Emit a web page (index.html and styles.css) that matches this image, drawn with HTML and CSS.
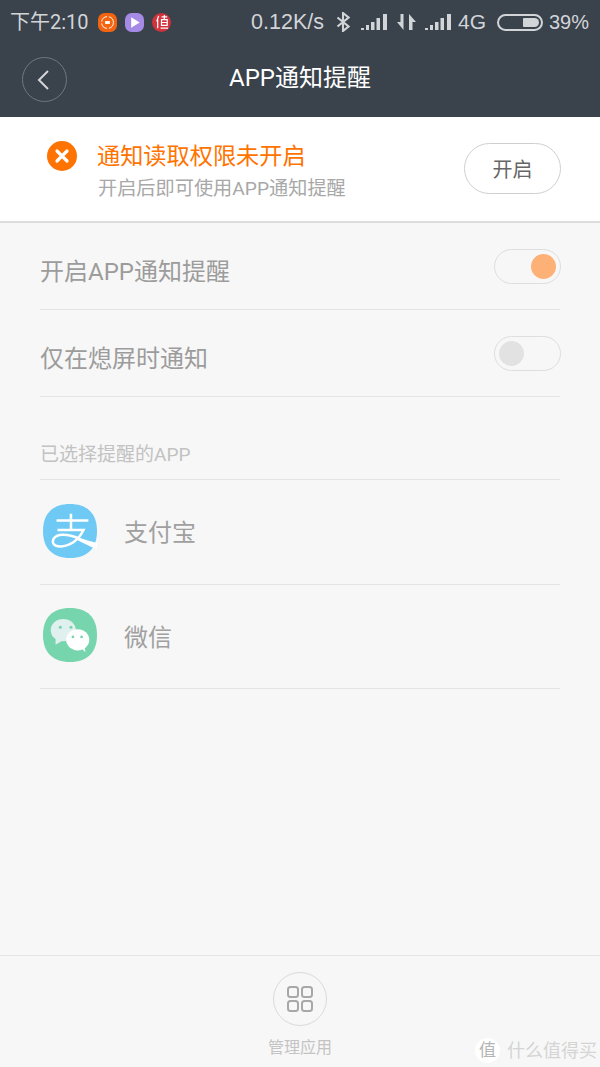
FILE: index.html
```html
<!DOCTYPE html>
<html lang="zh">
<head>
<meta charset="utf-8">
<title>APP通知提醒</title>
<link rel="stylesheet" href="styles.css">
</head>
<body>
<div class="page">
  <header class="header">
    <div class="status">
      <div class="status-left">
        <span class="time">下午2:10</span>
        <svg class="note" viewBox="0 0 20 20"><rect width="20" height="20" rx="7" fill="#f2640f"/><circle cx="10" cy="10" r="6.200" fill="none" stroke="#fff" stroke-width="1" stroke-dasharray="8 2"/><rect x="7.500" y="8.500" width="5" height="3" fill="#fff"/></svg>
        <svg class="note" viewBox="0 0 20 20"><rect width="20" height="20" rx="7" fill="#a58be6"/><path d="M6.500 4.500 15.500 10 6.500 15.500Z" fill="#fff"/></svg>
        <svg class="note" viewBox="0 0 20 20"><circle cx="10" cy="10" r="10" fill="#d0333c"/><path d="M7 3 5 9M6 7v9M10 4h6M13 2v5M10 7h6v6h-6zM10 10h6M9 16h8" stroke="#fff" stroke-width="1.300" fill="none"/></svg>
      </div>
      <div class="status-right">
        <span class="speed">0.12K/s</span>
        <svg class="bt" viewBox="0 0 14 20"><path d="M1.500 5.500 12.500 14.500 7 19V1l5.500 4.500L1.500 14.500" fill="none" stroke="#d2d5d8" stroke-width="2.100"/></svg>
        <svg class="signal" viewBox="0 0 26 18"><path d="M0 15h3v2H0zM5 12h3v5H5zM10 9h3.500v8H10zM15.500 5H19v12h-3.500zM22 1h4v16h-4z" fill="#d2d5d8"/></svg>
        <svg class="arrows" viewBox="0 0 20 18"><path d="M0 9h3.500V1h3v16zM12 17V1l7 8h-3.500v8z" fill="#d2d5d8"/></svg>
        <svg class="signal" viewBox="0 0 26 18"><path d="M0 15h3v2H0zM5 12h3v5H5zM10 9h3.500v8H10zM15.500 5H19v12h-3.500zM22 1h4v16h-4z" fill="#d2d5d8"/></svg>
        <span class="net">4G</span>
        <span class="battery"><span class="battery-fill"></span></span>
        <span class="percent">39%</span>
      </div>
    </div>
    <div class="titlebar">
      <button class="back" aria-label="返回">
        <svg viewBox="0 0 14 22" width="14" height="22"><path d="M12 2 3 11l9 9" fill="none" stroke="#d4d6d9" stroke-width="2"/></svg>
      </button>
      <h1 class="title">APP通知提醒</h1>
    </div>
  </header>

  <section class="banner">
    <span class="error-icon">
      <svg viewBox="0 0 30 30" width="30" height="30"><circle cx="15" cy="15" r="15" fill="#ff7300"/><path d="M10 10l10 10M20 10 10 20" stroke="#fff" stroke-width="3.200" stroke-linecap="round"/></svg>
    </span>
    <div class="banner-text">
      <div class="banner-title">通知读取权限未开启</div>
      <div class="banner-sub">开启后即可使用APP通知提醒</div>
    </div>
    <button class="open-btn">开启</button>
  </section>

  <main class="content">
    <div class="row setting">
      <span class="label">开启APP通知提醒</span>
      <span class="switch on"><span class="knob"></span></span>
    </div>
    <div class="row setting">
      <span class="label">仅在熄屏时通知</span>
      <span class="switch"><span class="knob"></span></span>
    </div>
    <div class="row section">已选择提醒的APP</div>
    <div class="row app">
      <svg class="app-icon" viewBox="0 0 56 56">
        <path d="M28 0C46 0 56 10 56 28S46 56 28 56 0 46 0 28 10 0 28 0Z" fill="#6fc9f5"/>
        <path d="M14 17H47M29 10V27M15 27H42C37 37 29 43 19 44 11 44.500 9 40 11 36 14 31 24 30 38 36" fill="none" stroke="#fff" stroke-width="2.600"/>
        <path d="M37 34.500C43 37 50 39 56 40.500V47C49 44 43 41 36 37.500Z" fill="#fff"/>
      </svg>
      <span class="app-name">支付宝</span>
    </div>
    <div class="row app">
      <svg class="app-icon" viewBox="0 0 56 56">
        <path d="M28 0C46 0 56 10 56 28S46 56 28 56 0 46 0 28 10 0 28 0Z" fill="#76d5ad"/>
        <ellipse cx="21" cy="23" rx="13" ry="11.500" fill="#dff0ee"/>
        <path d="M13 31l0 7 7-4z" fill="#dff0ee"/>
        <circle cx="18" cy="20" r="1.600" fill="#76d5ad"/>
        <circle cx="29" cy="20" r="1.600" fill="#76d5ad"/>
        <ellipse cx="36" cy="33" rx="12" ry="11" fill="#fff"/>
        <path d="M40 42l4 4-1-7z" fill="#fff"/>
        <circle cx="31" cy="30" r="1.400" fill="#76d5ad"/>
        <circle cx="40" cy="30" r="1.400" fill="#76d5ad"/>
      </svg>
      <span class="app-name">微信</span>
    </div>
  </main>

  <footer class="footer">
    <button class="manage" aria-label="管理应用">
      <svg viewBox="0 0 26 26" width="26" height="26">
        <rect x="1" y="1" width="10" height="10" rx="2.500" fill="none" stroke="#a8a8a8" stroke-width="2"/>
        <rect x="15" y="1" width="10" height="10" rx="2.500" fill="none" stroke="#a8a8a8" stroke-width="2"/>
        <rect x="1" y="15" width="10" height="10" rx="2.500" fill="none" stroke="#a8a8a8" stroke-width="2"/>
        <rect x="15" y="15" width="10" height="10" rx="2.500" fill="none" stroke="#a8a8a8" stroke-width="2"/>
      </svg>
    </button>
    <span class="manage-label">管理应用</span>
  </footer>

  <div class="watermark">
    <span class="wm-badge">值</span>
    <span class="wm-text">什么值得买</span>
  </div>
</div>
</body>
</html>
```
FILE: styles.css
```css
* { box-sizing: border-box; }
html, body { margin: 0; padding: 0; }
body { font-family: Roboto, "Noto Sans CJK SC", sans-serif; background: #f7f7f7; }
button { font-family: inherit; background: none; padding: 0; }

.page { position: relative; width: 600px; height: 1067px; display: flex; flex-direction: column; overflow: hidden; }

.header { height: 117px; flex: none; background: #3a424c; display: flex; flex-direction: column; }

.status { height: 44px; display: flex; justify-content: space-between; align-items: center; padding: 0 11px 0 10px; color: #d2d5d8; font-size: 20px; }
.status-left { display: flex; align-items: center; }
.time { margin-right: 9px; line-height: 24px; }
.note { width: 19px; height: 19px; margin-right: 8px; }
.status-right { display: flex; align-items: center; font-family: "Liberation Sans", sans-serif; }
.speed { font-size: 21.500px; margin-right: 12px; }
.bt { width: 14px; height: 20px; margin-right: 11px; }
.signal { width: 26px; height: 18px; }
.arrows { width: 20px; height: 18px; margin: 0 8px 0 10px; }
.net { font-size: 21px; margin: 0 11px 0 7px; }
.battery { width: 46px; height: 17px; border: 2px solid #d2d5d8; border-radius: 9px; padding: 2px; display: flex; justify-content: flex-end; margin-right: 6px; }
.battery-fill { width: 16px; height: 100%; background: #d2d5d8; border-radius: 1px 5px 5px 1px; }
.percent { font-size: 20px; }

.titlebar { position: relative; flex: 1; display: flex; align-items: center; justify-content: center; padding-bottom: 5px; }
.back { position: absolute; left: 22px; top: 13px; width: 45px; height: 45px; border: 1px solid #6f767e; border-radius: 50%; display: flex; align-items: center; justify-content: center; padding-right: 3px; }
.title { margin: 0; font-size: 24px; font-weight: 400; color: #fff; line-height: 30px; }

.banner { height: 106px; flex: none; background: #fff; border-bottom: 2px solid #dcdcdc; display: flex; align-items: flex-start; padding: 24px 39px 0 47px; }
.error-icon { width: 30px; height: 30px; flex: none; display: block; margin-right: 20px; }
.banner-text { flex: 1; }
.banner-title { font-size: 23.200px; line-height: 30px; color: #ff7300; }
.banner-sub { font-size: 19.200px; line-height: 26px; color: #a8a8a8; margin-top: 5px; padding-left: 1px; }
.open-btn { width: 97px; height: 51px; margin-top: 2px; border: 1px solid #cfcfcf; border-radius: 26px; background: #fff; color: #666; font-size: 20px; }

.content { padding: 0 40px; flex: 1; }
.row { border-bottom: 1px solid #e4e4e4; }
.setting { display: flex; align-items: center; justify-content: space-between; height: 87px; }
.label { font-size: 24px; color: #9c9c9c; margin-top: 6px; }
.switch { width: 67px; height: 35px; border: 1px solid #dedede; border-radius: 18px; display: flex; align-items: center; padding: 0 4px; margin-right: -1px; }
.switch.on { justify-content: flex-end; }
.knob { width: 25px; height: 25px; border-radius: 50%; background: #e2e2e2; }
.switch.on .knob { background: #fdb176; }
.section { height: 83px; font-size: 19px; color: #c2c2c2; display: flex; align-items: flex-end; padding-bottom: 13px; }
.app { display: flex; align-items: center; height: 104.500px; padding-left: 3px; }
.app-icon { width: 54px; height: 56px; flex: none; margin: 0 27px 2px 0; }
.app-name { font-size: 24px; color: #a0a0a0; margin-bottom: 2px; }

.footer { height: 112px; flex: none; border-top: 1px solid #e4e4e4; display: flex; flex-direction: column; align-items: center; padding-top: 16px; }
.manage { width: 54px; height: 54px; border: 1px solid #dadada; border-radius: 50%; display: flex; align-items: center; justify-content: center; }
.manage-label { font-size: 16px; line-height: 22px; color: #c4c4c4; margin-top: 11px; }

.watermark { position: absolute; right: 3px; bottom: 4px; display: flex; align-items: center; gap: 7px; color: #d4d4d4; }
.wm-badge { width: 25px; height: 25px; border-radius: 50%; background: #fff; color: #b4b4b4; font-size: 17px; line-height: 24px; text-align: center; }
.wm-text { font-size: 18px; line-height: 24px; }
```
